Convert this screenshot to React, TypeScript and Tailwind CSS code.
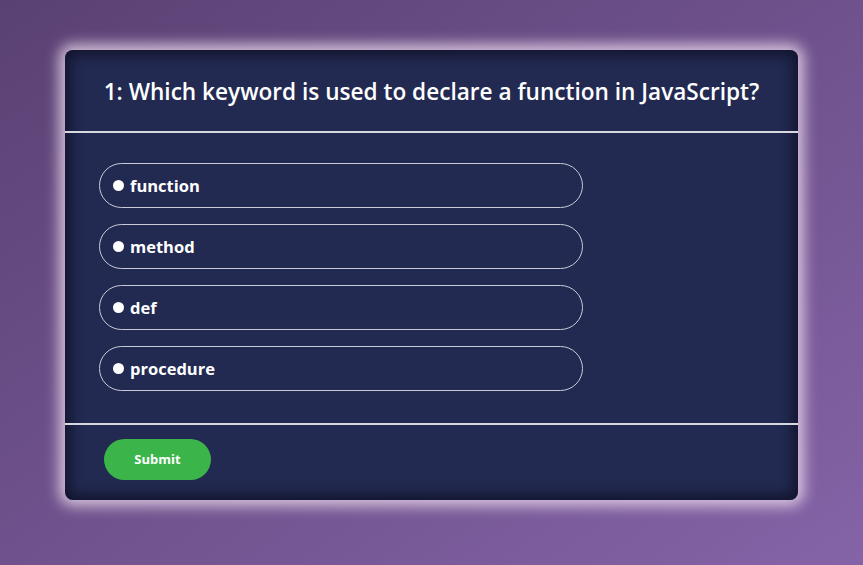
import React from "react";

const options = ["function", "method", "def", "procedure"];

export default function App() {
  return (
    <div className="min-h-[565px] w-full bg-gradient-to-br from-[#5a4173] to-[#8563a7] pt-[50px] font-['Open_Sans',sans-serif]">
      <div className="mx-auto w-[733px] rounded-lg bg-[#232a52] shadow-[0_0_14px_6px_rgba(238,220,238,0.8),inset_0_0_14px_5px_rgba(8,8,25,0.65)]">
        <div className="flex h-[83px] items-center justify-center border-b-2 border-[#d8d8e0] pt-[3px]">
          <h1 className="text-[22.6px] font-semibold text-white">
            1: Which keyword is used to declare a function in JavaScript?
          </h1>
        </div>
        <div className="flex flex-col gap-4 px-[34px] pt-[30px] pb-8">
          {options.map((o) => (
            <label
              key={o}
              className="flex h-[45px] w-[484px] items-center gap-[6px] rounded-full border border-[#c9cad8] pl-[13px] text-[16.5px] font-bold text-white"
            >
              <span className="h-[11px] w-[11px] rounded-full bg-white" />
              <span className="pt-[2px]">{o}</span>
            </label>
          ))}
        </div>
        <div className="border-t-2 border-[#d8d8e0] px-[39px] pb-5 pt-[14px]">
          <button className="h-[41px] w-[107px] rounded-full bg-[#3bb54a] text-[13px] font-bold text-white">
            Submit
          </button>
        </div>
      </div>
    </div>
  );
}
